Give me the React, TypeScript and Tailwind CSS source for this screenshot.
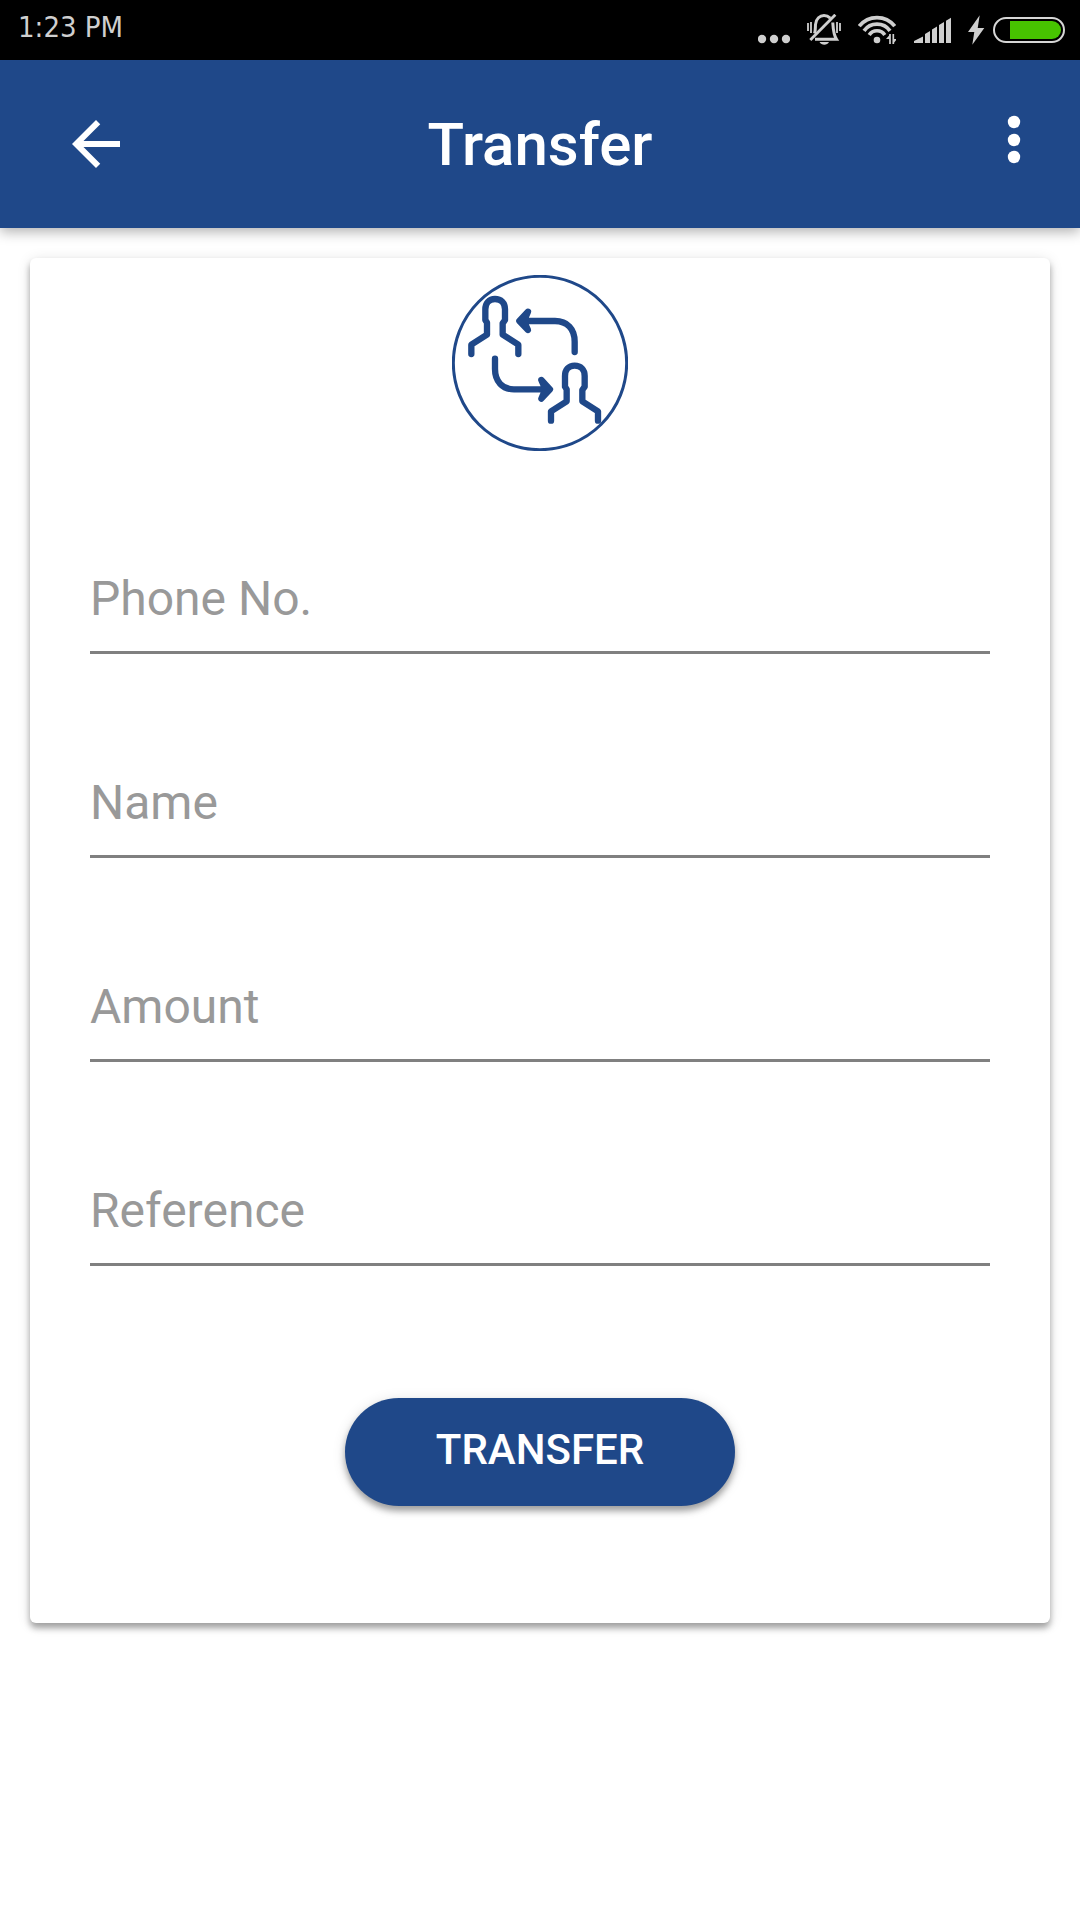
import { useState } from "react";

const fields = [
  { id: "phone", label: "Phone No.", type: "tel" },
  { id: "name", label: "Name", type: "text" },
  { id: "amount", label: "Amount", type: "text" },
  { id: "reference", label: "Reference", type: "text" },
];

function StatusBar() {
  return (
    <div className="flex h-[60px] items-center justify-between bg-black pr-[15px] pl-[18px] text-[#cfcfcf]">
      <span className="pb-1.5 font-['DejaVu_Sans_Condensed','DejaVu_Sans',sans-serif] text-[29px] leading-8">
        1:23 PM
      </span>
      <div className="flex items-center gap-[17px]">
        {/* more notifications */}
        <svg width="32" height="32" viewBox="0 0 32 32" fill="currentColor">
          <circle cx="4" cy="25" r="4.200" />
          <circle cx="16" cy="25" r="4.200" />
          <circle cx="28" cy="25" r="4.200" />
        </svg>
        {/* silent */}
        <svg width="34" height="32" viewBox="0 0 34 32" fill="none" stroke="currentColor">
          <path d="M1 9v8M4 8v11M30 8v11M33 9v8" strokeWidth="1.800" />
          <path
            d="M7.500 19.500C8.500 17 8.300 14 8.500 10.500C9 4.500 13 1.500 17 1.500C19.500 1.500 21.500 2.500 23.300 4.200M25.800 8.500C26.200 15 26.200 20 29.500 25.300H8"
            strokeWidth="3"
          />
          <path d="M28.300 0.700L3.300 26" strokeWidth="2.800" />
          <path d="M12.500 28h9.500c-1 2-2.600 2.700-4.700 2.700s-3.800-.7-4.800-2.700z" fill="currentColor" stroke="none" />
        </svg>
        {/* wifi */}
        <svg width="38" height="32" viewBox="0 0 38 32" fill="none" stroke="currentColor" strokeWidth="3.700">
          <path d="M1.300 12.200A22.500 22.500 0 0 1 36.700 12.200" />
          <path d="M6 16.800A16 16 0 0 1 32 16.800" />
          <path d="M11.200 21A9.300 9.300 0 0 1 26.800 21" />
          <circle cx="19" cy="26" r="3.300" fill="currentColor" stroke="none" />
          <path d="M32 20v10M35.300 20v10" strokeWidth="1.700" />
          <path d="M28 25L32 20.500V25zM35.300 25h3.700L35.300 29.500z" fill="currentColor" stroke="none" />
        </svg>
        {/* signal */}
        <svg width="38" height="32" viewBox="-1 0 38 32" fill="currentColor">
          <path d="M0 29v-2l9-4.500V29zM11 29V20l5-3v12zM18 29V15.500l5-3V29zM25 29V11l5-3v21zM32 29V6.700l5-3V29z" />
        </svg>
        {/* charging battery */}
        <div className="flex gap-2">
          <svg width="17" height="32" viewBox="0 0 17 32" fill="currentColor">
            <path d="M11.700 1.300L0 18h6.300L4.300 30.700L16.300 14H9.700z" />
          </svg>
          <svg width="72" height="32" viewBox="0 0 72 32" fill="none">
            <rect x="1" y="4" width="70" height="24" rx="12" stroke="#d6d6d6" strokeWidth="2" />
            <path d="M17 7h42a9 9 0 0 1 0 18H17z" fill="#47c400" />
          </svg>
        </div>
      </div>
    </div>
  );
}

function Header() {
  return (
    <header className="grid h-[168px] grid-cols-[1fr_auto_1fr] items-center bg-[#1f4889] px-[30px] text-white shadow-[0_4px_12px_rgba(0,0,0,0.3)]">
      <button type="button" aria-label="Back" className="justify-self-start px-[30px]">
        <svg width="72" height="72" viewBox="0 0 24 24" fill="currentColor">
          <path d="M20 11H7.830l5.590-5.590L12 4l-8 8 8 8 1.410-1.410L7.830 13H20v-2z" />
        </svg>
      </button>
      <h1 className="pt-0.5 text-[60px] leading-[72px] font-medium">Transfer</h1>
      <button type="button" aria-label="More options" className="justify-self-end">
        <svg width="72" height="72" viewBox="0 0 72 72" fill="currentColor">
          <circle cx="36" cy="14" r="6.200" />
          <circle cx="36" cy="32" r="6.200" />
          <circle cx="36" cy="49" r="6.200" />
        </svg>
      </button>
    </header>
  );
}

function TransferIcon() {
  const person =
    "M94 280V252L141 222V186L136 178V146C136 127 147 115 165 115S195 127 195 146V178L188 188V222L235 252V280";

  return (
    <svg
      width="176"
      height="176"
      viewBox="36 43 528 528"
      fill="none"
      stroke="#1f4889"
      strokeWidth="19"
      strokeLinecap="round"
      strokeLinejoin="round"
    >
      <circle cx="300" cy="307" r="260" strokeWidth="9" />
      <path d={person} />
      <path d={person} transform="translate(239 200)" />
      <path d="M404 274V243C404 205 382 181 345 181H245M264 153L238 181L264 208L252 181Z" />
      <path d="M165 294V325C165 362 187 386 222 386H324M304 358L330 386L304 414L316 386Z" />
    </svg>
  );
}

export default function App() {
  const [values, setValues] = useState<Record<string, string>>({});

  return (
    <div className="min-h-screen bg-white font-[Roboto,sans-serif]">
      <StatusBar />
      <Header />
      <main className="p-[30px]">
        <form
          onSubmit={(e) => e.preventDefault()}
          className="flex flex-col items-center rounded-md bg-white px-[60px] pt-[17px] pb-[117px] shadow-[0_5px_6px_rgba(0,0,0,0.32),0_2px_14px_rgba(0,0,0,0.12)]"
        >
          <TransferIcon />
          <div className="mt-24 flex w-full flex-col gap-[97px]">
            {fields.map((field) => (
              <input
                key={field.id}
                id={field.id}
                type={field.type}
                aria-label={field.label}
                placeholder={field.label}
                value={values[field.id] ?? ""}
                onChange={(e) => setValues({ ...values, [field.id]: e.target.value })}
                className="box-content h-14 border-b-[3px] border-[#808080] py-6 text-[48px] text-gray-900 outline-none placeholder:text-[#999999]"
              />
            ))}
          </div>
          <button
            type="submit"
            className="mt-[132px] rounded-full bg-[#1f4889] px-[91px] pt-6 pb-7 text-[42px] leading-[56px] font-medium text-white shadow-[0_5px_6px_rgba(0,0,0,0.32),0_2px_14px_rgba(0,0,0,0.12)]"
          >
            TRANSFER
          </button>
        </form>
      </main>
    </div>
  );
}
